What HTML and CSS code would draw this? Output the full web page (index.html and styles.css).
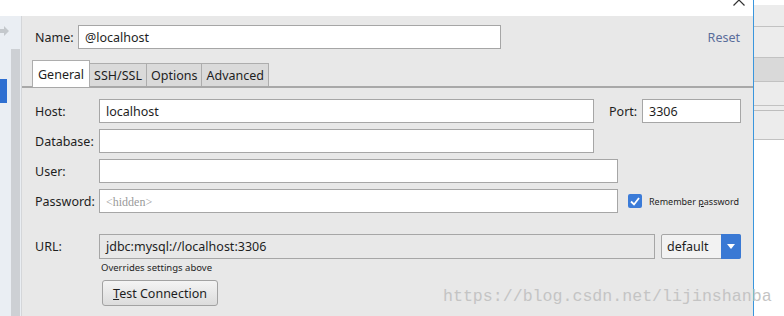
FILE: index.html
```html
<!DOCTYPE html>
<html>

<head>
  <title>Data Source Properties</title>
  <link rel="stylesheet" href="styles.css">
</head>

<body>
  <div class="window">
    <div class="left-area">
      <div class="top-strip">
        <svg class="close-icon" width="14" height="6" viewBox="0 0 14 6">
          <path d="M7 0 L1.5 5.5 M7 0 L12.5 5.5" stroke="#333" stroke-width="1.2" fill="none" />
        </svg>
      </div>
      <div class="body-row">
        <div class="sidebar">
          <svg class="nav-arrow" width="14" height="12" viewBox="0 0 14 12">
            <path d="M0 4 H6 V1 L11 6 L6 11 V8 H0 Z" fill="#c4c8cc" />
          </svg>
          <div class="selection"></div>
          <div class="scrollbar"></div>
        </div>

        <div class="panel">
          <div class="name-row">
            <label class="name-label" for="ds-name">Name:</label>
            <input class="field name-input" id="ds-name" type="text" value="@localhost">
            <a class="reset-link">Reset</a>
          </div>

          <div class="tabs">
            <div class="tab active">General</div>
            <div class="tab">SSH/SSL</div>
            <div class="tab">Options</div>
            <div class="tab">Advanced</div>
          </div>

          <div class="tab-body">
            <div class="form-row">
              <span class="form-label">Host:</span>
              <input class="field host-input" type="text" value="localhost">
              <span class="port-label">Port:</span>
              <input class="field port-input" type="text" value="3306">
            </div>
            <div class="form-row">
              <span class="form-label">Database:</span>
              <input class="field host-input" type="text">
            </div>
            <div class="form-row">
              <span class="form-label">User:</span>
              <input class="field user-input" type="text">
            </div>
            <div class="form-row">
              <span class="form-label">Password:</span>
              <input class="field user-input password-input" type="text" placeholder="<hidden>">
              <span class="checkbox">
                <svg width="10" height="9" viewBox="0 0 10 9">
                  <path d="M1 4.5 L4 7.5 L9 1" stroke="#fff" stroke-width="1.8" fill="none" />
                </svg>
              </span>
              <span class="remember">Remember <u>p</u>assword</span>
            </div>

            <div class="form-row url-row">
              <span class="form-label">URL:</span>
              <div class="url-field">jdbc:mysql://localhost:3306</div>
              <div class="dropdown">
                <span class="dropdown-text">default</span>
                <span class="dropdown-button">
                  <svg width="8" height="5" viewBox="0 0 8 5">
                    <path d="M0 0 H8 L4 5 Z" fill="#fff" />
                  </svg>
                </span>
              </div>
            </div>
            <div class="hint">Overrides settings above</div>
            <button class="test-button"><u>T</u>est Connection</button>
          </div>
        </div>
      </div>
    </div>

    <div class="divider"></div>

    <div class="right-strip">
      <div class="strip-row first"></div>
      <div class="strip-row tall"></div>
      <div class="strip-row selected"></div>
      <div class="strip-row"></div>
      <div class="strip-row short"></div>
      <div class="strip-row last"></div>
    </div>

    <div class="watermark">https://blog.csdn.net/lijinshanba</div>
  </div>
</body>

</html>
```

FILE: styles.css
```css
body {
  margin: 0;
  font-family: "Noto Sans", sans-serif;
  font-size: 12.5px;
  color: #1e1e1e;
  background: #ffffff;
}

.window {
  position: relative;
  display: flex;
  width: 784px;
  height: 316px;
  overflow: hidden;
}

.left-area {
  display: flex;
  flex-direction: column;
  width: 753px;
}

.top-strip {
  position: relative;
  height: 16px;
  background: #ffffff;
}

.close-icon {
  position: absolute;
  left: 732px;
  top: 0;
}

.body-row {
  display: flex;
  flex: 1;
}

.sidebar {
  position: relative;
  width: 21px;
  background: #eaeef3;
  border-right: 1px solid #d4d6d9;
}

.nav-arrow {
  position: absolute;
  left: -2px;
  top: 9px;
}

.selection {
  position: absolute;
  left: 0;
  top: 63px;
  width: 7px;
  height: 24px;
  background: #2e6fd1;
}

.scrollbar {
  position: absolute;
  left: 11px;
  top: 33px;
  width: 9px;
  bottom: 0;
  background: #cdd0d4;
}

.panel {
  flex: 1;
  background: #e8e8e8;
}

.name-row {
  display: flex;
  align-items: center;
  margin-top: 9px;
  padding: 0 13px;
  height: 24px;
}

.name-label {
  width: 43px;
}

.field {
  box-sizing: border-box;
  height: 24px;
  padding: 0 6px;
  border: 1px solid #a6a6a6;
  background: #ffffff;
  font-family: "Noto Sans", sans-serif;
  font-size: 12.5px;
  color: #1e1e1e;
  outline: none;
}

.name-input {
  width: 423px;
}

.reset-link {
  margin-left: auto;
  color: #5a6d9b;
}

.tabs {
  display: flex;
  margin-top: 11px;
  padding-left: 10px;
  height: 26px;
  border-bottom: 2px solid #a8a8a8;
}

.tab {
  display: flex;
  align-items: center;
  padding: 0 4px;
  height: 22px;
  margin-top: 3px;
  background: #dadada;
  border: 1px solid #adadad;
  border-left: none;
  border-bottom: none;
}

.tab.active {
  height: 26px;
  margin-top: 0;
  margin-bottom: -2px;
  padding: 0 5px;
  background: #ffffff;
  border-left: 1px solid #adadad;
}

.tab-body {
  padding: 11px 0 0 13px;
}

.form-row {
  display: flex;
  align-items: center;
  height: 24px;
  margin-bottom: 6px;
}

.form-label {
  width: 64px;
}

.host-input {
  width: 495px;
}

.port-label {
  margin-left: 15px;
  width: 33px;
}

.port-input {
  width: 99px;
}

.user-input {
  width: 519px;
}

.password-input::placeholder {
  font-family: "Liberation Serif", serif;
  font-size: 12px;
  color: #9a9a9a;
}

.checkbox {
  display: flex;
  align-items: center;
  justify-content: center;
  width: 14px;
  height: 14px;
  margin-left: 10px;
  border-radius: 2px;
  background: #3b7bd8;
}

.remember {
  margin-left: 7px;
  font-size: 9px;
}

.url-row {
  margin-top: 21px;
  height: 25px;
  margin-bottom: 0;
}

.url-field {
  box-sizing: border-box;
  display: flex;
  align-items: center;
  width: 556px;
  height: 25px;
  padding: 0 6px;
  border: 1px solid #a6a6a6;
  background: #e8e8e8;
}

.dropdown {
  box-sizing: border-box;
  display: flex;
  width: 80px;
  height: 25px;
  margin-left: 6px;
  border: 1px solid #a6a6a6;
  border-radius: 2px;
  background: #f2f2f2;
}

.dropdown-text {
  flex: 1;
  display: flex;
  align-items: center;
  padding-left: 5px;
}

.dropdown-button {
  display: flex;
  align-items: center;
  justify-content: center;
  width: 20px;
  margin: -1px -1px -1px 0;
  border-radius: 0 2px 2px 0;
  background: #3a79d4;
}

.hint {
  margin: 2px 0 0 66px;
  font-size: 9.5px;
  line-height: 13px;
}

.test-button {
  box-sizing: border-box;
  margin: 6px 0 0 67px;
  width: 116px;
  height: 26px;
  padding: 0;
  border: 1px solid #a2a2a2;
  border-radius: 3px;
  background: linear-gradient(#f4f4f4, #dcdcdc);
  font-family: "Noto Sans", sans-serif;
  font-size: 12.5px;
  color: #1e1e1e;
}

.divider {
  width: 1px;
  background: #3a96dd;
}

.right-strip {
  flex: 1;
  display: flex;
  flex-direction: column;
  background: #ffffff;
}

.strip-row {
  height: 23px;
  background: #ececec;
  border-bottom: 1px solid #c2c2c2;
}

.strip-row.first {
  height: 21px;
  margin-top: 5px;
}

.strip-row.tall {
  height: 30px;
}

.strip-row.selected {
  background: #d9d9d9;
}

.strip-row.short {
  height: 4px;
  border-bottom-color: #bdbdbd;
}

.strip-row.last {
  height: 28px;
}

.watermark {
  position: absolute;
  left: 443px;
  top: 287px;
  font-family: "Liberation Mono", monospace;
  font-size: 16.6px;
  color: #c4c4c4;
}
```
